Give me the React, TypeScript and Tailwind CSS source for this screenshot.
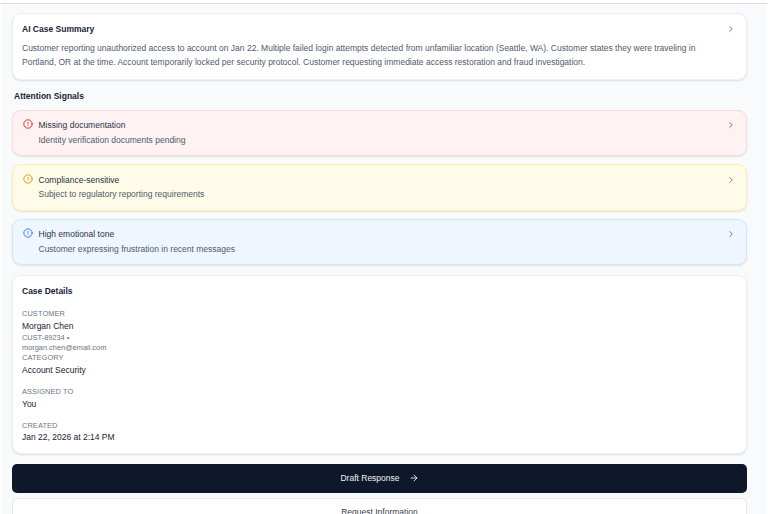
import React from "react";
import { ChevronRight, CircleAlert, ArrowRight } from "lucide-react";

const signals = [
  { title: "Missing documentation", desc: "Identity verification documents pending", box: "bg-[#fef2f2] border-[#fbdcdc]", icon: "text-[#e7333a]" },
  { title: "Compliance-sensitive", desc: "Subject to regulatory reporting requirements", box: "bg-[#fefce8] border-[#fdeeb0]", icon: "text-[#ee9323]" },
  { title: "High emotional tone", desc: "Customer expressing frustration in recent messages", box: "bg-[#eff6ff] border-[#d5e5fd]", icon: "text-[#3f7ff5]" },
];

function Field({ label, value, className = "" }: { label: string; value: string; className?: string }) {
  return (
    <div className={className}>
      <div className="text-[7.4px] uppercase leading-[10px] tracking-[0.1px] text-[#6b7688]">{label}</div>
      <div className="mt-[0.5px] text-[8.5px] leading-[13px] text-[#1a2333]">{value}</div>
    </div>
  );
}

export default function App() {
  return (
    <div className="h-screen overflow-hidden bg-white font-['Liberation_Sans',sans-serif]">
      <div className="h-[4px] border-b border-[#dcdfe6] bg-white" />
      <div className="mx-[2px] flex h-full flex-col bg-[#f8fafc] pl-[10px] pr-[19px] pt-[9px]">
        <section className="h-[67px] shrink-0 rounded-[9px] border border-[#eef0f3] bg-white pl-[9px] pr-[10px] pt-[8.5px] shadow-[0_1px_2px_rgba(0,0,0,0.12)]">
          <div className="flex items-center justify-between">
            <h2 className="text-[8.5px] font-bold leading-[12px] text-[#1a2333]">AI Case Summary</h2>
            <ChevronRight strokeWidth={2.2} className="h-[10px] w-[10px] text-[#6b7280]" />
          </div>
          <p className="mt-[6.5px] pr-[16px] text-[8.5px] leading-[14.3px] text-[#4f5a6b]">
            Customer reporting unauthorized access to account on Jan 22. Multiple failed login attempts detected from unfamiliar location (Seattle, WA). Customer states they were traveling in Portland, OR at the time. Account temporarily locked per security protocol. Customer requesting immediate access restoration and fraud investigation.
          </p>
        </section>

        <h3 className="mt-[9.5px] shrink-0 px-[2px] text-[8.5px] font-bold leading-[12px] text-[#1a2333]">Attention Signals</h3>

        <div className="mt-[8px] flex shrink-0 flex-col gap-[8px]">
          {signals.map((s) => (
            <div key={s.title} className={`flex h-[46.5px] items-start rounded-[9px] border pl-[9.5px] pr-[10px] pt-[7.5px] shadow-[0_1px_2px_rgba(0,0,0,0.1)] ${s.box}`}>
              <CircleAlert strokeWidth={2.4} className={`mr-[6px] mt-[1px] h-[10px] w-[10px] shrink-0 ${s.icon}`} />
              <div className="flex-1">
                <div className="text-[8.5px] leading-[14px] text-[#2a3342]">{s.title}</div>
                <div className="mt-[0.5px] text-[8.5px] leading-[14px] text-[#4f5a6b]">{s.desc}</div>
              </div>
              <ChevronRight strokeWidth={2.2} className="mt-[2px] h-[10px] w-[10px] text-[#6b7280]" />
            </div>
          ))}
        </div>

        <section className="mt-[10px] h-[178.5px] shrink-0 rounded-[9px] border border-[#eef0f3] bg-white pl-[9px] pr-[10px] pt-[9px] shadow-[0_1px_2px_rgba(0,0,0,0.12)]">
          <h2 className="text-[8.5px] font-bold leading-[12px] text-[#1a2333]">Case Details</h2>
          <div className="mt-[12px] text-[7.4px] uppercase leading-[10px] tracking-[0.1px] text-[#6b7688]">CUSTOMER</div>
          <div className="mt-[1px] text-[8.5px] leading-[13px] text-[#1a2333]">Morgan Chen</div>
          <div className="text-[7.4px] leading-[10px] text-[#6b7280]">CUST-89234 •</div>
          <div className="text-[7.4px] leading-[10px] text-[#6b7280]">morgan.chen@email.com</div>
          <Field label="CATEGORY" value="Account Security" />
          <Field label="ASSIGNED TO" value="You" className="mt-[10.5px]" />
          <Field label="CREATED" value="Jan 22, 2026 at 2:14 PM" className="mt-[10px]" />
        </section>

        <button className="mt-[10px] flex h-[29px] shrink-0 items-center justify-center gap-[9px] rounded-[5px] bg-[#0f172a] text-[8.5px] text-[#f1f3f6]">
          Draft Response
          <ArrowRight strokeWidth={2.2} className="h-[10px] w-[10px]" />
        </button>
        <button className="mt-[5px] h-[29px] shrink-0 rounded-[5px] border border-[#e5e7eb] bg-white text-[8.5px] text-[#374151]">
          Request Information
        </button>
      </div>
    </div>
  );
}
